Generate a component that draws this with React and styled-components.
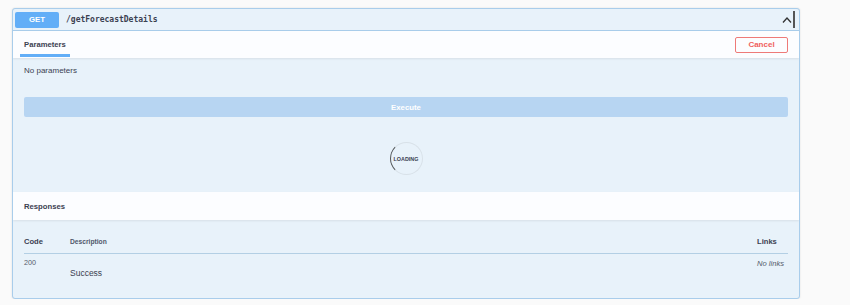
import React from "react";
import styled, { createGlobalStyle } from "styled-components";

const GlobalStyle = createGlobalStyle`
  body {
    margin: 0;
    background: #fafafa;
    font-family: "Liberation Sans", Arial, sans-serif;
    color: #3b4151;
  }
`;

const App = () => (
  <Page>
    <GlobalStyle />
    <Block>
      <Summary>
        <Method>GET</Method>
        <Path>/getForecastDetails</Path>
        <Toggle>
          <svg width="10" height="6" viewBox="0 0 10 6">
            <path d="M1 5.5 L5 1 L9 5.5" fill="none" stroke="#333" strokeWidth="1.3" />
          </svg>
          <FocusBar />
        </Toggle>
      </Summary>

      <SectionHeader $height={27}>
        <Tab>Parameters</Tab>
        <CancelButton>Cancel</CancelButton>
      </SectionHeader>

      <ParamsBody>
        <Note>No parameters</Note>
        <ExecuteButton>Execute</ExecuteButton>
        <LoaderWrap>
          <Loader>
            <Spinner />
            <LoaderText>LOADING</LoaderText>
          </Loader>
        </LoaderWrap>
      </ParamsBody>

      <SectionHeader $height={28}>
        <Title>Responses</Title>
      </SectionHeader>

      <ResponsesBody>
        <HeadRow>
          <ColHead>Code</ColHead>
          <ColHead $small>Description</ColHead>
          <ColHead>Links</ColHead>
        </HeadRow>
        <BodyRow>
          <Code>200</Code>
          <Description>Success</Description>
          <NoLinks>No links</NoLinks>
        </BodyRow>
      </ResponsesBody>
    </Block>
  </Page>
);

const Page = styled.div`
  padding: 8px 0 0 12px;
`;

const Block = styled.div`
  width: 788px;
  box-sizing: border-box;
  border: 1px solid #a9cdeb;
  border-radius: 3px;
  background: #e8f2fa;
  box-shadow: 0 0 2px rgba(0, 0, 0, 0.12);
  overflow: hidden;
`;

const Summary = styled.div`
  display: flex;
  align-items: center;
  padding: 2px 4px 2px 2px;
  border-bottom: 1px solid #a9cdeb;
`;

const Method = styled.div`
  width: 44px;
  height: 16px;
  display: flex;
  align-items: center;
  justify-content: center;
  background: #62aef7;
  border-radius: 2px;
  color: #fff;
  font-weight: bold;
  font-size: 7.8px;
`;

const Path = styled.span`
  margin-left: 7px;
  font-family: "DejaVu Sans Mono", "Liberation Mono", monospace;
  font-weight: bold;
  font-size: 8px;
  color: #3b4151;
`;

const Toggle = styled.div`
  margin-left: auto;
  display: flex;
  align-items: center;
  gap: 1px;
  height: 17px;
`;

const FocusBar = styled.div`
  width: 2px;
  height: 17px;
  background: #555;
`;

const SectionHeader = styled.div`
  height: ${(p) => p.$height}px;
  box-sizing: border-box;
  display: flex;
  align-items: center;
  justify-content: space-between;
  padding: 0 11px;
  background: rgba(255, 255, 255, 0.85);
  box-shadow: 0 1px 2px rgba(0, 0, 0, 0.08);
`;

const Tab = styled.div`
  position: relative;
  font-weight: bold;
  font-size: 7.7px;
  line-height: 9px;

  &::after {
    content: "";
    position: absolute;
    left: -10%;
    width: 120%;
    bottom: -8px;
    height: 3px;
    background: #62aef7;
  }
`;

const Title = styled.div`
  font-weight: bold;
  font-size: 7.7px;
`;

const CancelButton = styled.button`
  width: 53px;
  height: 16px;
  padding: 0;
  border: 1.5px solid #ee7a78;
  border-radius: 2px;
  background: transparent;
  color: #f0605d;
  font-family: inherit;
  font-weight: bold;
  font-size: 8px;
`;

const ParamsBody = styled.div`
  padding: 8px 11px 17px;
`;

const Note = styled.div`
  font-size: 8px;
  line-height: 10px;
`;

const ExecuteButton = styled.div`
  margin-top: 21px;
  height: 20px;
  display: flex;
  align-items: center;
  justify-content: center;
  background: #b7d5f2;
  border-radius: 2px;
  color: #fff;
  font-weight: bold;
  font-size: 7.8px;
`;

const LoaderWrap = styled.div`
  margin-top: 25px;
  display: flex;
  justify-content: center;
`;

const Loader = styled.div`
  position: relative;
  width: 33px;
  height: 33px;
  display: flex;
  align-items: center;
  justify-content: center;
`;

const Spinner = styled.div`
  position: absolute;
  inset: 0;
  border-radius: 50%;
  border: 1.5px solid rgba(85, 85, 85, 0.1);
  border-left-color: rgba(0, 0, 0, 0.65);
  box-sizing: border-box;
`;

const LoaderText = styled.span`
  font-weight: bold;
  font-size: 5.4px;
  color: #3b4151;
`;

const ResponsesBody = styled.div`
  padding: 0 11px 19px;
`;

const Grid = styled.div`
  display: grid;
  grid-template-columns: 46px 1fr 31px;
`;

const HeadRow = styled(Grid)`
  padding: 17px 0 6px;
  border-bottom: 1px solid #b3cfe4;
  align-items: center;
`;

const ColHead = styled.div`
  font-weight: bold;
  font-size: ${(p) => (p.$small ? "6.7px" : "7.6px")};
  line-height: 10px;
  color: ${(p) => (p.$small ? "#50586a" : "#3b4151")};
`;

const BodyRow = styled(Grid)`
  padding-top: 4px;
`;

const Code = styled.div`
  font-size: 7.2px;
  line-height: 10px;
  color: #555c6a;
`;

const Description = styled.div`
  padding-top: 10px;
  font-size: 8.5px;
  line-height: 11px;
`;

const NoLinks = styled.div`
  font-style: italic;
  font-size: 7.6px;
  line-height: 12px;
  color: #555c6a;
`;

export default App;
